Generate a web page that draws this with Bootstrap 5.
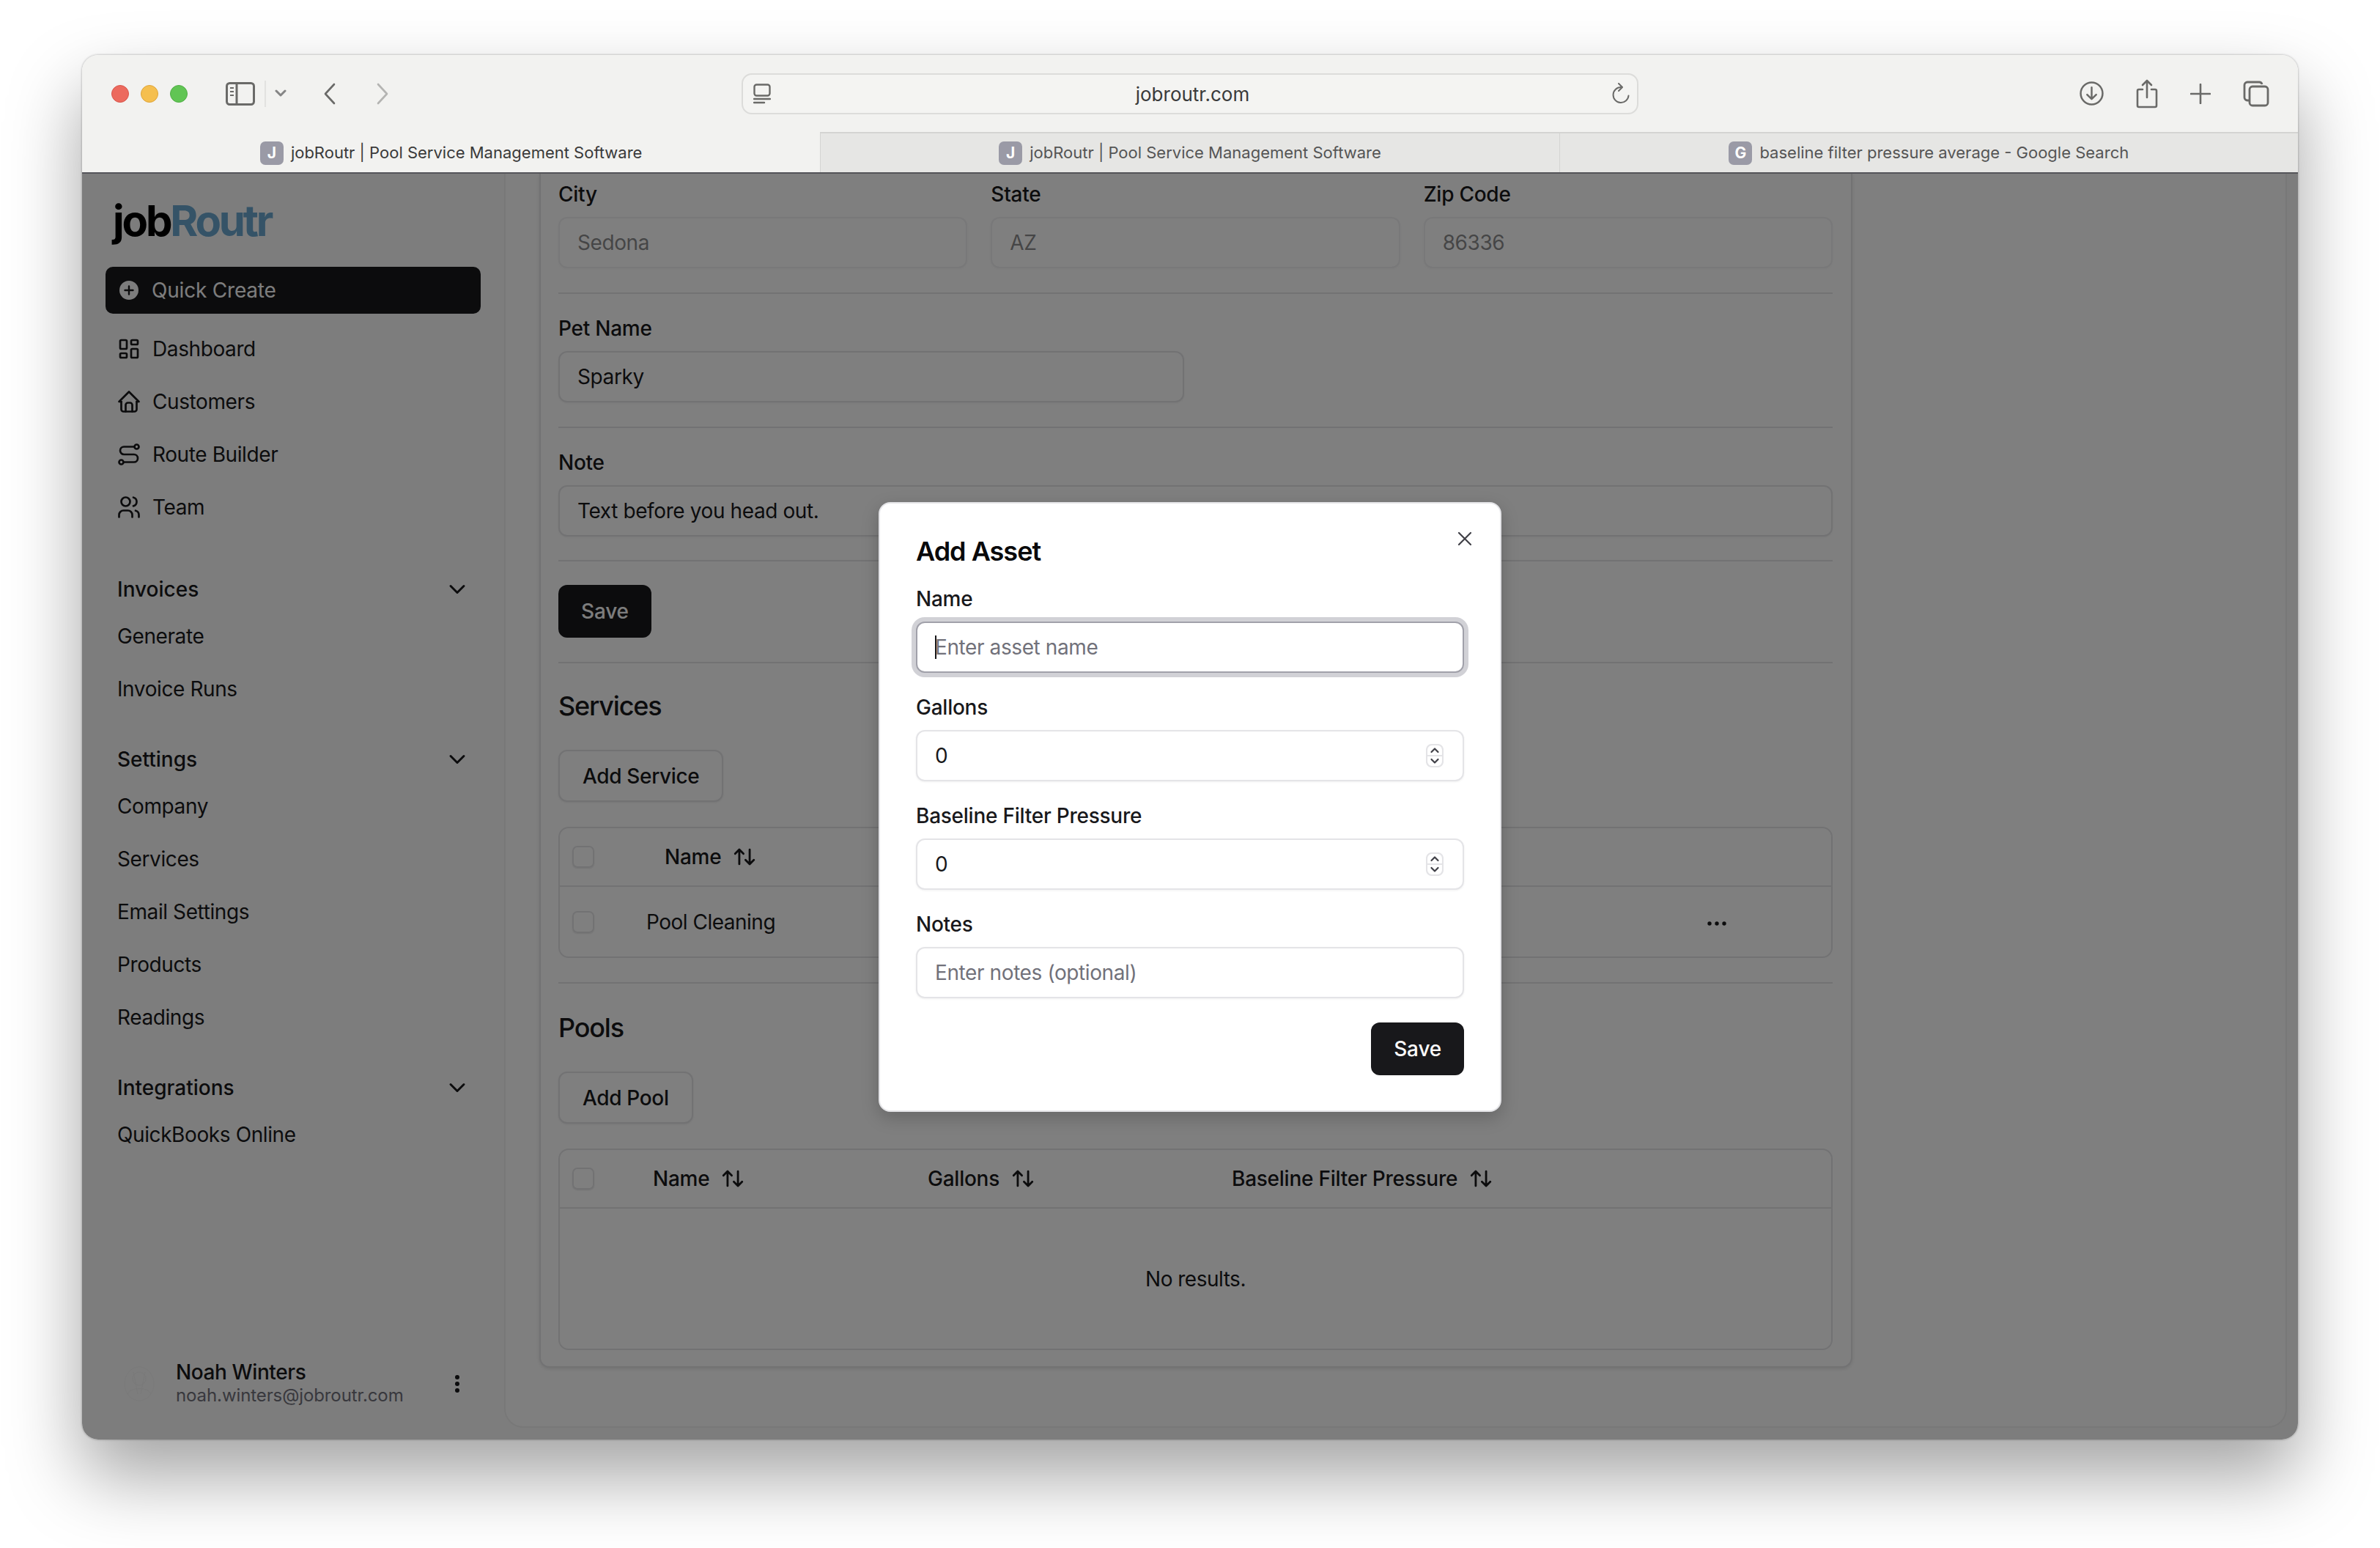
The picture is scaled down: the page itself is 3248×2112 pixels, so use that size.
<!DOCTYPE html>
<html lang="en">
<head>
  <meta charset="UTF-8" />
  <title>jobRoutr | Pool Service Management Software</title>
  <link rel="stylesheet" href="https://cdn.jsdelivr.net/npm/bootstrap@5.3.3/dist/css/bootstrap.min.css" />
  <style>
    html, body { height: 100%; }
    body { background: #fff; font-family: Inter, "Liberation Sans", sans-serif; font-size: 28px; letter-spacing: -.4px; color: #18181b; padding: 75px 112px 0; overflow: hidden; }
    svg.ic { fill: none; stroke: currentColor; stroke-width: 2; stroke-linecap: round; stroke-linejoin: round; flex: none; }

    .browser-win { position: relative; width: 3024px; height: 1889px; border-radius: 22px; overflow: hidden; }
    .win-shadow { box-shadow: 0 50px 100px rgba(0,0,0,.36), 0 0 3px rgba(0,0,0,.35); border-radius: 22px; width: 3024px; height: 1889px; }

    /* safari chrome */
    .tool-strip { height: 105px; background: #f2f2f0; display: grid; grid-template-columns: 900px 1224px 1fr; align-items: center; color: #6a6a68; letter-spacing: 0; }
    .light { width: 24px; height: 24px; border-radius: 50%; }
    .light-r { background: #ec6a5e; border: 1px solid #d8564b; }
    .light-y { background: #f5bf4f; border: 1px solid #dfa53a; }
    .light-g { background: #61c554; border: 1px solid #50ad45; }
    .lights { padding-left: 40px; gap: 16px; }
    .side-ic { margin-left: 52px; }
    .tool-sep { width: 2px; height: 36px; background: #e2e2e0; margin: 0 12px 0 13px; }
    .back-ic { margin-left: 50px; }
    .fwd-ic { margin-left: 54px; color: #b4b4b2; }
    .addr-bar { height: 56px; border: 2px solid #dcdcda; border-radius: 14px; background: #f4f4f2; padding: 0 9px 0 14px; }
    .addr-text { font-size: 26px; color: #3a3a3a; margin-left: 4px; padding-top: 2px; }
    .tool-right { justify-content: flex-end; padding-right: 39px; }
    .tool-right svg + svg { margin-left: 44px; }

    .tab-strip { height: 57px; display: flex; border-bottom: 2px solid #55555a; letter-spacing: 0; }
    .tab-item { flex: 1 1 0; background: #e6e6e4; color: #555; font-size: 22px; gap: 10px; border-top: 2px solid #d4d4d2; border-left: 1px solid #d4d4d2; }
    .tab-item.is-active { background: #f2f2f0; color: #3a3a3a; border: 0; padding-top: 2px; }
    .fav { width: 32px; height: 32px; border-radius: 7px; background: #9a9aa6; color: #fff; font-size: 21px; font-weight: 700; line-height: 32px; text-align: center; }

    /* app */
    .app-body { height: 1727px; display: flex; background: #fafafa; position: relative; }
    .side-col { width: 576px; flex: none; padding: 0 32px; display: flex; flex-direction: column; }
    .logo-word { font-size: 58px; font-weight: 700; letter-spacing: -3.2px; line-height: 70px; color: #000; margin: 29px 0 28px 10px; height: 70px; }
    .logo-word span { color: #6aa7cf; }
    .quick-btn { height: 64px; background: #18181b; color: #fafafa; border-radius: 10px; padding: 0 19px; gap: 18px; font-size: 28px; letter-spacing: -.2px; }
    .menu-row { height: 72px; padding-left: 16px; color: #18181b; white-space: nowrap; }
    .menu-icon { padding-left: 14px; gap: 14px; }
    .menu-icon svg.ic { stroke-width: 1.800; }
    .menu-top { margin-top: 12px; margin-bottom: 16px; }
    .menu-head { height: 56px; padding: 0 14px 0 16px; margin-top: 32px; font-weight: 500; letter-spacing: 0; justify-content: space-between; }
    .user-foot { margin-top: auto; padding: 0 28px 44px 22px; gap: 26px; }
    .user-name { font-size: 28px; line-height: 32px; font-weight: 500; }
    .user-mail { font-size: 24px; line-height: 32px; color: #71717a; letter-spacing: -.1px; }

    .main-col { width: 2433px; flex: none; height: 1711px; background: #fff; border: 2px solid #f0f0f0; border-top: 0; border-radius: 0 0 26px 26px; padding-left: 46px; }
    .form-panel { width: 1792px; height: 1629px; background: #fff; border: 2px solid #e4e4e7; border-top: 0; border-radius: 0 0 14px 14px; box-shadow: 0 2px 5px rgba(0,0,0,.1); padding: 14px 25px 0 24px; }
    .field-lbl { display: block; font-size: 28px; line-height: 28px; font-weight: 500; letter-spacing: -.25px; margin-bottom: 17px; color: #18181b; }
    .field-box.form-control { height: 70px; font-size: 28px; letter-spacing: -.4px; padding: 0 24px; border: 2px solid #e4e4e7; border-radius: 12px; color: #18181b; background: #fff; box-shadow: 0 1px 3px rgba(0,0,0,.06); }
    .field-box.form-control:disabled { opacity: .5; background: #fff; }
    .field-box.form-control::placeholder { color: #71717a; opacity: 1; }
    .field-box.is-focus.form-control { border-color: #a1a1aa; box-shadow: 0 0 0 6px #d1d1d6; }
    .addr-row { display: grid; grid-template-columns: repeat(3, 1fr); gap: 32px; }
    .half-field { width: 854px; }
    .sec-rule { height: 2px; background: #e4e4e7; margin: 33px 0; opacity: 1; border: 0; }
    .sec-rule-tight { margin: 32px 0; }
    .sec-title { font-size: 36px; line-height: 44px; font-weight: 500; letter-spacing: -1.2px; margin: 36px 0 38px; color: #18181b; }
    .sec-title-low { margin-top: 38px; }
    .dark-btn.btn { height: 72px; background: #18181b; border: 0; color: #fafafa; font-size: 28px; font-weight: 500; letter-spacing: -.2px; border-radius: 12px; padding: 0 31px; }
    .line-btn.btn { height: 71px; background: #fff; border: 2px solid #e4e4e7; color: #18181b; font-size: 28px; font-weight: 500; letter-spacing: -.35px; border-radius: 12px; padding: 0 31px; box-shadow: 0 1px 3px rgba(0,0,0,.08); display: block; }
    .grid-wrap { margin-top: 34px; border: 2px solid #e4e4e7; border-radius: 14px; overflow: hidden; }
    .grid-wrap .table { margin: 0; table-layout: fixed; --bs-table-bg: transparent; font-size: 28px; color: #18181b; }
    .grid-wrap th, .grid-wrap td { border-bottom: 0; padding: 0; vertical-align: middle; font-weight: 500; letter-spacing: -.25px; }
    .grid-wrap td { font-weight: 400; letter-spacing: -.5px; }
    .grid-wrap thead tr { height: 79px; border-bottom: 2px solid #e4e4e7; }
    .row-svc { height: 96px; }
    .row-empty { height: 192px; }
    .tick-box { width: 30px; height: 30px; border: 2px solid #e4e4e7; border-radius: 7px; margin-left: 17px; box-shadow: 0 1px 2px rgba(0,0,0,.1); display: block; }
    .sort-head { padding-left: 25px; gap: 15px; }
    .col-tick-a { width: 118px; }
    .col-tick-b { width: 102px; }
    .col-name-b { width: 375px; }
    .col-gal-b { width: 415px; }
    .dots-cell { text-align: right; padding-right: 142px !important; }

    /* dialog layer */
    .dim-layer { position: absolute; inset: 162px 0 0 0; background: rgba(0,0,0,.5); }
    .add-dialog { position: absolute; left: 1087px; top: 610px; width: 850px; height: 832px; background: #fff; border: 2px solid #e4e4e7; border-radius: 16px; padding: 43px 49px 0; box-shadow: 0 8px 24px rgba(0,0,0,.2); }
    .dlg-title { font-size: 36px; line-height: 44px; font-weight: 600; letter-spacing: -1px; margin: 0 0 29px; color: #09090b; }
    .dlg-close { position: absolute; right: 38px; top: 38px; color: #3f3f46; }
    .dlg-gap { margin-bottom: 33px; }
    .num-wrap { position: relative; }
    .num-spin { position: absolute; right: 28px; top: 19px; }
    .text-caret { position: absolute; left: 26px; top: 19px; width: 2px; height: 32px; background: #18181b; }
  </style>
</head>
<body>

  <svg width="0" height="0" class="d-none">
    <defs>
      <symbol id="sort" viewBox="0 0 24 24"><path d="M3 9l4-4l4 4m-4-4v14" /><path d="M21 15l-4 4l-4-4m4 4v-14" /></symbol>
      <symbol id="chev" viewBox="0 0 24 24"><path d="M6 9l6 6l6-6" /></symbol>
    </defs>
  </svg>

  <div class="win-shadow">
  <div class="browser-win">

    <div class="tool-strip">
      <div class="d-flex align-items-center">
        <div class="lights d-flex">
          <div class="light light-r"></div>
          <div class="light light-y"></div>
          <div class="light light-g"></div>
        </div>
        <svg class="side-ic" width="40" height="32" viewBox="0 0 40 32" fill="none" stroke="currentColor" stroke-width="3"><rect x="1.500" y="1.500" width="37" height="29" rx="4" /><path d="M15 2v28" /><path d="M6 8h5M6 13h5M6 18h5" stroke-width="2" /></svg>
        <div class="tool-sep"></div>
        <svg width="16" height="12" viewBox="0 0 16 12" fill="none" stroke="#858585" stroke-width="3" stroke-linecap="round" stroke-linejoin="round"><path d="M2 2l6 6l6-6" /></svg>
        <svg class="back-ic" width="18" height="30" viewBox="0 0 18 30" fill="none" stroke="currentColor" stroke-width="2.600" stroke-linecap="round" stroke-linejoin="round"><path d="M15 2L3 15l12 13" /></svg>
        <svg class="fwd-ic" width="18" height="30" viewBox="0 0 18 30" fill="none" stroke="currentColor" stroke-width="2.600" stroke-linecap="round" stroke-linejoin="round"><path d="M3 2l12 13L3 28" /></svg>
      </div>
      <div class="addr-bar d-flex align-items-center justify-content-between">
        <svg width="24" height="28" viewBox="0 0 24 28" fill="none" stroke="currentColor" stroke-width="2.400" stroke-linecap="round"><rect x="1.500" y="1.500" width="21" height="15" rx="3" /><path d="M1 21h22M1 26h14" /></svg>
        <span class="addr-text">jobroutr.com</span>
        <svg width="26" height="30" viewBox="0 0 26 30" fill="none" stroke="currentColor" stroke-width="2" stroke-linecap="round" stroke-linejoin="round"><path d="M13 6a10.500 10.500 0 1 0 10.500 11.500" /><path d="M10 1l5 5l-5 5" /></svg>
      </div>
      <div class="tool-right d-flex align-items-center">
        <svg width="33" height="33" viewBox="0 0 32 32" fill="none" stroke="currentColor" stroke-width="2.400" stroke-linecap="round" stroke-linejoin="round"><circle cx="16" cy="16" r="14.500" /><path d="M16 8v15M10 17.500l6 6l6-6" /></svg>
        <svg width="30" height="40" viewBox="0 0 30 40" fill="none" stroke="currentColor" stroke-width="2.600" stroke-linecap="round" stroke-linejoin="round"><path d="M9 14H4a2 2 0 0 0-2 2v20a2 2 0 0 0 2 2h22a2 2 0 0 0 2-2V16a2 2 0 0 0-2-2h-5" /><path d="M15 25V2M9 8l6-6l6 6" /></svg>
        <svg width="28" height="28" viewBox="0 0 28 28" fill="none" stroke="currentColor" stroke-width="2.600" stroke-linecap="round"><path d="M14 1v26M1 14h26" /></svg>
        <svg width="36" height="36" viewBox="0 0 36 36" fill="none" stroke="currentColor" stroke-width="2.800" stroke-linejoin="round"><path d="M8 27H6a4 4 0 0 1-4-4V6a4 4 0 0 1 4-4h16a4 4 0 0 1 4 3" /><rect x="9" y="8" width="25" height="26" rx="4" /></svg>
      </div>
    </div>

    <div class="tab-strip">
      <div class="tab-item is-active d-flex align-items-center justify-content-center">
        <div class="fav">J</div><span>jobRoutr | Pool Service Management Software</span>
      </div>
      <div class="tab-item d-flex align-items-center justify-content-center">
        <div class="fav">J</div><span>jobRoutr | Pool Service Management Software</span>
      </div>
      <div class="tab-item d-flex align-items-center justify-content-center">
        <div class="fav">G</div><span>baseline filter pressure average - Google Search</span>
      </div>
    </div>

    <div class="app-body">
      <aside class="side-col">
        <div class="logo-word">job<span>Routr</span></div>
        <div class="quick-btn d-flex align-items-center">
          <svg width="26" height="26" viewBox="0 0 26 26"><circle cx="13" cy="13" r="13" fill="#fafafa" /><path d="M13 7.500v11M7.500 13h11" stroke="#18181b" stroke-width="2.400" stroke-linecap="round" /></svg>
          <span>Quick Create</span>
        </div>

        <div class="menu-top">
          <div class="menu-row menu-icon d-flex align-items-center">
            <svg class="ic" width="36" height="36" viewBox="0 0 24 24"><path d="M5 4h4a1 1 0 0 1 1 1v6a1 1 0 0 1-1 1H5a1 1 0 0 1-1-1V5a1 1 0 0 1 1-1" /><path d="M5 16h4a1 1 0 0 1 1 1v2a1 1 0 0 1-1 1H5a1 1 0 0 1-1-1v-2a1 1 0 0 1 1-1" /><path d="M15 12h4a1 1 0 0 1 1 1v6a1 1 0 0 1-1 1h-4a1 1 0 0 1-1-1v-6a1 1 0 0 1 1-1" /><path d="M15 4h4a1 1 0 0 1 1 1v2a1 1 0 0 1-1 1h-4a1 1 0 0 1-1-1V5a1 1 0 0 1 1-1" /></svg>
            <span>Dashboard</span>
          </div>
          <div class="menu-row menu-icon d-flex align-items-center">
            <svg class="ic" width="36" height="36" viewBox="0 0 24 24"><path d="M5 12H3l9-9l9 9h-2" /><path d="M5 12v7a2 2 0 0 0 2 2h10a2 2 0 0 0 2-2v-7" /><path d="M9 21v-6a2 2 0 0 1 2-2h2a2 2 0 0 1 2 2v6" /></svg>
            <span>Customers</span>
          </div>
          <div class="menu-row menu-icon d-flex align-items-center">
            <svg class="ic" width="36" height="36" viewBox="0 0 24 24"><path d="M3 19a2 2 0 1 0 4 0a2 2 0 0 0-4 0" /><path d="M19 7a2 2 0 1 0 0-4a2 2 0 0 0 0 4" /><path d="M7 19h9.500a3.500 3.500 0 0 0 0-7h-9a3.500 3.500 0 0 1 0-7H17" /></svg>
            <span>Route Builder</span>
          </div>
          <div class="menu-row menu-icon d-flex align-items-center">
            <svg class="ic" width="36" height="36" viewBox="0 0 24 24"><path d="M5 7a4 4 0 1 0 8 0a4 4 0 0 0-8 0" /><path d="M3 21v-2a4 4 0 0 1 4-4h4a4 4 0 0 1 4 4v2" /><path d="M16 3.130a4 4 0 0 1 0 7.750" /><path d="M21 21v-2a4 4 0 0 0-3-3.850" /></svg>
            <span>Team</span>
          </div>
        </div>

        <div class="menu-head d-flex align-items-center">
          <span>Invoices</span>
          <svg class="ic" width="36" height="36"><use href="#chev" /></svg>
        </div>
        <div class="menu-row d-flex align-items-center">Generate</div>
        <div class="menu-row d-flex align-items-center">Invoice Runs</div>

        <div class="menu-head d-flex align-items-center">
          <span>Settings</span>
          <svg class="ic" width="36" height="36"><use href="#chev" /></svg>
        </div>
        <div class="menu-row d-flex align-items-center">Company</div>
        <div class="menu-row d-flex align-items-center">Services</div>
        <div class="menu-row d-flex align-items-center">Email Settings</div>
        <div class="menu-row d-flex align-items-center">Products</div>
        <div class="menu-row d-flex align-items-center">Readings</div>

        <div class="menu-head d-flex align-items-center">
          <span>Integrations</span>
          <svg class="ic" width="36" height="36"><use href="#chev" /></svg>
        </div>
        <div class="menu-row d-flex align-items-center">QuickBooks Online</div>

        <div class="user-foot d-flex align-items-center">
          <svg width="48" height="48" viewBox="0 0 48 48" fill="none" stroke="#f3f3f3" stroke-width="1"><ellipse cx="24" cy="24" rx="20" ry="23" /><circle cx="24" cy="17" r="9" /><path d="M8 38c4-10 28-10 32 0M16 8l6 30M32 8l-6 30" /></svg>
          <div class="flex-grow-1">
            <div class="user-name">Noah Winters</div>
            <div class="user-mail">noah.winters@jobroutr.com</div>
          </div>
          <svg width="8" height="26" viewBox="0 0 8 26" fill="#18181b"><circle cx="4" cy="4" r="3" /><circle cx="4" cy="13" r="3" /><circle cx="4" cy="22" r="3" /></svg>
        </div>
      </aside>

      <main class="main-col">
        <div class="form-panel">
          <div class="addr-row">
            <div>
              <label class="field-lbl">City</label>
              <input class="form-control field-box" value="Sedona" disabled />
            </div>
            <div>
              <label class="field-lbl">State</label>
              <input class="form-control field-box" value="AZ" disabled />
            </div>
            <div>
              <label class="field-lbl">Zip Code</label>
              <input class="form-control field-box" value="86336" disabled />
            </div>
          </div>
          <hr class="sec-rule" />
          <label class="field-lbl">Pet Name</label>
          <input class="form-control field-box half-field" value="Sparky" />
          <hr class="sec-rule" />
          <label class="field-lbl">Note</label>
          <input class="form-control field-box" value="Text before you head out." />
          <hr class="sec-rule sec-rule-tight" />
          <button class="btn dark-btn">Save</button>
          <hr class="sec-rule" />

          <h3 class="sec-title">Services</h3>
          <button class="btn line-btn">Add Service</button>
          <div class="grid-wrap">
            <table class="table">
              <colgroup><col class="col-tick-a" /><col /><col /></colgroup>
              <thead>
                <tr>
                  <th><span class="tick-box"></span></th>
                  <th><div class="sort-head d-flex align-items-center">Name <svg class="ic" width="34" height="34"><use href="#sort" /></svg></div></th>
                  <th></th>
                </tr>
              </thead>
              <tbody>
                <tr class="row-svc">
                  <td><span class="tick-box"></span></td>
                  <td>Pool Cleaning</td>
                  <td class="dots-cell"><svg width="28" height="8" viewBox="0 0 28 8" fill="#18181b"><circle cx="4" cy="4" r="2.700" /><circle cx="14" cy="4" r="2.700" /><circle cx="24" cy="4" r="2.700" /></svg></td>
                </tr>
              </tbody>
            </table>
          </div>
          <hr class="sec-rule" />

          <h3 class="sec-title sec-title-low">Pools</h3>
          <button class="btn line-btn">Add Pool</button>
          <div class="grid-wrap">
            <table class="table">
              <colgroup><col class="col-tick-b" /><col class="col-name-b" /><col class="col-gal-b" /><col /></colgroup>
              <thead>
                <tr>
                  <th><span class="tick-box"></span></th>
                  <th><div class="sort-head d-flex align-items-center">Name <svg class="ic" width="34" height="34"><use href="#sort" /></svg></div></th>
                  <th><div class="sort-head d-flex align-items-center">Gallons <svg class="ic" width="34" height="34"><use href="#sort" /></svg></div></th>
                  <th><div class="sort-head d-flex align-items-center">Baseline Filter Pressure <svg class="ic" width="34" height="34"><use href="#sort" /></svg></div></th>
                </tr>
              </thead>
              <tbody>
                <tr class="row-empty"><td colspan="4" class="text-center">No results.</td></tr>
              </tbody>
            </table>
          </div>
        </div>
      </main>
    </div>

    <div class="dim-layer"></div>

    <div class="add-dialog">
      <h2 class="dlg-title">Add Asset</h2>
      <svg class="dlg-close" width="20" height="20" viewBox="0 0 20 20" fill="none" stroke="currentColor" stroke-width="2.200" stroke-linecap="round"><path d="M2 2l16 16M18 2L2 18" /></svg>

      <label class="field-lbl">Name</label>
      <div class="num-wrap dlg-gap">
        <input class="form-control field-box is-focus" placeholder="Enter asset name" />
        <span class="text-caret"></span>
      </div>

      <label class="field-lbl">Gallons</label>
      <div class="num-wrap dlg-gap">
        <input class="form-control field-box" value="0" />
        <svg class="num-spin" width="24" height="32" viewBox="0 0 24 32" fill="none" stroke="#3f3f46" stroke-width="2.200" stroke-linecap="round" stroke-linejoin="round"><rect x="1" y="1" width="22" height="30" rx="7" stroke="#e4e4e7" /><path d="M1 16h22" stroke="#e4e4e7" /><path d="M7.500 11L12 6.500l4.500 4.500M7.500 21l4.500 4.500l4.500-4.500" /></svg>
      </div>

      <label class="field-lbl">Baseline Filter Pressure</label>
      <div class="num-wrap dlg-gap">
        <input class="form-control field-box" value="0" />
        <svg class="num-spin" width="24" height="32" viewBox="0 0 24 32" fill="none" stroke="#3f3f46" stroke-width="2.200" stroke-linecap="round" stroke-linejoin="round"><rect x="1" y="1" width="22" height="30" rx="7" stroke="#e4e4e7" /><path d="M1 16h22" stroke="#e4e4e7" /><path d="M7.500 11L12 6.500l4.500 4.500M7.500 21l4.500 4.500l4.500-4.500" /></svg>
      </div>

      <label class="field-lbl">Notes</label>
      <div class="dlg-gap">
        <input class="form-control field-box" placeholder="Enter notes (optional)" />
      </div>

      <div class="d-flex justify-content-end">
        <button class="btn dark-btn">Save</button>
      </div>
    </div>

  </div>
  </div>

  <script src="https://cdn.jsdelivr.net/npm/bootstrap@5.3.3/dist/js/bootstrap.bundle.min.js"></script>
</body>
</html>
